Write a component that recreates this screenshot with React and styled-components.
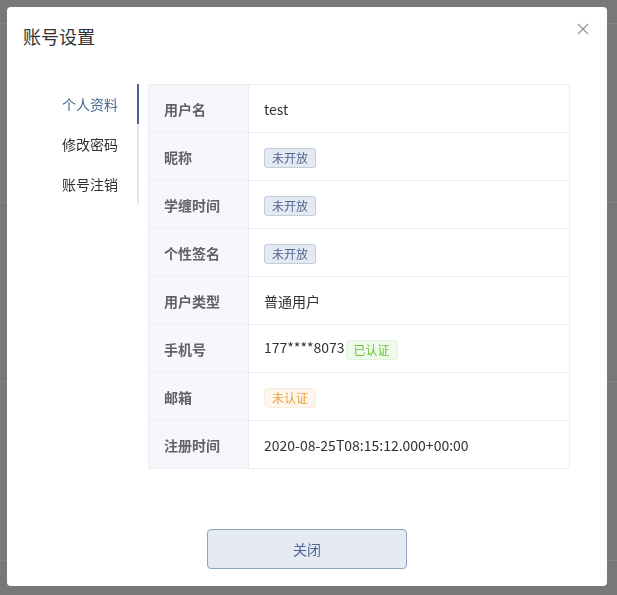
import React from "react"
import styled, { createGlobalStyle } from "styled-components"

const GlobalStyle = createGlobalStyle`
  html, body {
    margin: 0;
    padding: 0;
    background: #787878;
    font-family: "Noto Sans CJK SC", "Noto Sans", sans-serif;
  }
  * {
    box-sizing: border-box;
  }
`

const Backdrop = styled.div`
  height: 595px;
  overflow: hidden;
  .bar {
    height: 24px;
    border-bottom: 1px solid #838383;
  }
  .row {
    height: 179px;
    border-bottom: 1px solid #838383;
  }
`

const Overlay = styled.div`
  position: fixed;
  inset: 0;
  padding: 7px;
`

const Dialog = styled.div`
  width: 600px;
  height: 579px;
  background: #fff;
  border-radius: 4px;
  display: flex;
  flex-direction: column;
`

const Header = styled.div`
  display: flex;
  justify-content: space-between;
  align-items: flex-start;
  padding: 13px 18px 0 16px;
  h3 {
    margin: 0;
    font-size: 18px;
    line-height: 24px;
    font-weight: 400;
    color: #303133;
    padding-top: 4px;
  }
`

const CloseButton = styled.button`
  width: 12px;
  height: 12px;
  margin-top: 3px;
  padding: 0;
  border: none;
  background: none;
  cursor: pointer;
  display: flex;
  svg {
    display: block;
  }
`

const Body = styled.div`
  display: flex;
  align-items: flex-start;
  padding: 36px 37px 0 40px;
`

const Tabs = styled.ul`
  width: 92px;
  margin: 0;
  padding: 0;
  list-style: none;
  border-right: 2px solid #e4e7ed;
`

const Tab = styled.li`
  height: 40px;
  line-height: 40px;
  padding-right: 19px;
  text-align: right;
  font-size: 14px;
  color: ${({ active }) => (active ? "#4a6794" : "#303133")};
  margin-right: -2px;
  border-right: 2px solid ${({ active }) => (active ? "#4a6794" : "transparent")};
  cursor: pointer;
`

const Table = styled.table`
  flex: 1;
  margin-left: 9px;
  border-collapse: collapse;
  font-size: 14px;
  th, td {
    height: 48px;
    border: 1px solid #ebeef5;
    padding: 0 0 0 15px;
    text-align: left;
  }
  th {
    width: 100px;
    background: #f5f7fa;
    color: #606266;
    font-weight: 700;
  }
  td {
    color: #303133;
  }
`

const Tag = styled.span`
  display: inline-flex;
  align-items: center;
  height: 20px;
  padding: 0 7px;
  font-size: 12px;
  border-radius: 3px;
  border: 1px solid ${({ tone }) => tones[tone].border};
  background: ${({ tone }) => tones[tone].bg};
  color: ${({ tone }) => tones[tone].color};
  vertical-align: middle;
  margin-left: ${({ gap }) => gap || 0}px;
`

const tones = {
  default: { bg: "#e5eaf2", border: "#c3cde0", color: "#4a6794" },
  success: { bg: "#f0f9eb", border: "#e1f3d8", color: "#67c23a" },
  warning: { bg: "#fdf6ec", border: "#faecd8", color: "#e6a23c" },
}

const Footer = styled.div`
  margin-top: auto;
  display: flex;
  justify-content: center;
  padding-bottom: 17px;
`

const Button = styled.button`
  width: 200px;
  height: 40px;
  border: 1px solid #8ca2c3;
  border-radius: 4px;
  background: #e4e9f2;
  color: #4a6794;
  font-size: 14px;
  font-family: inherit;
  cursor: pointer;
`

const rows = [
  { label: "用户名", value: "test" },
  { label: "昵称", tag: "未开放" },
  { label: "学缠时间", tag: "未开放" },
  { label: "个性签名", tag: "未开放" },
  { label: "用户类型", value: "普通用户" },
  { label: "手机号", value: "177****8073", tag: "已认证", tone: "success", gap: 1 },
  { label: "邮箱", tag: "未认证", tone: "warning" },
  { label: "注册时间", value: "2020-08-25T08:15:12.000+00:00" },
]

const App = () => (
  <>
    <GlobalStyle />
    <Backdrop>
      <div className="bar" />
      <div className="row" />
      <div className="row" />
      <div className="row" />
    </Backdrop>
    <Overlay>
      <Dialog>
        <Header>
          <h3>账号设置</h3>
          <CloseButton aria-label="close">
            <svg width="12" height="12" viewBox="0 0 12 12">
              <path d="M1 1L11 11M11 1L1 11" stroke="#909399" strokeWidth="1.2" />
            </svg>
          </CloseButton>
        </Header>
        <Body>
          <Tabs>
            <Tab active>个人资料</Tab>
            <Tab>修改密码</Tab>
            <Tab>账号注销</Tab>
          </Tabs>
          <Table>
            <tbody>
              {rows.map(({ label, value, tag, tone, gap }) => (
                <tr key={label}>
                  <th>{label}</th>
                  <td>
                    {value}
                    {tag && <Tag tone={tone || "default"} gap={gap}>{tag}</Tag>}
                  </td>
                </tr>
              ))}
            </tbody>
          </Table>
        </Body>
        <Footer>
          <Button>关闭</Button>
        </Footer>
      </Dialog>
    </Overlay>
  </>
)

export default App
